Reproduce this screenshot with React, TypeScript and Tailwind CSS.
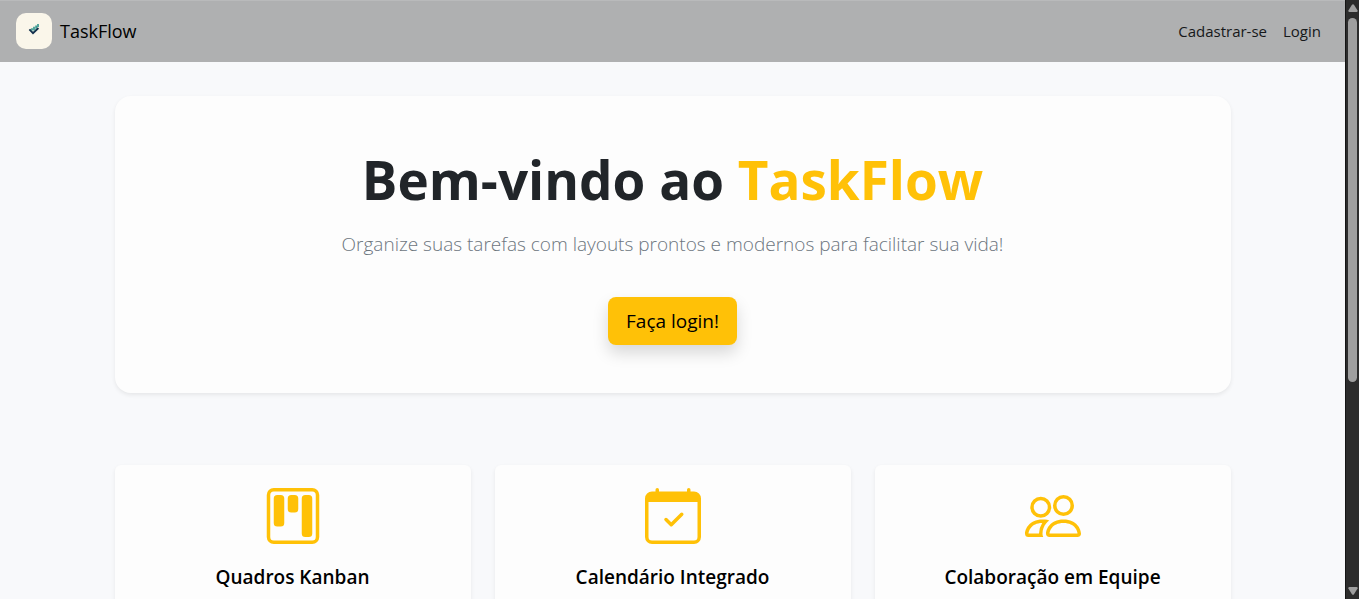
import { BsCalendarCheck, BsKanban, BsPeople } from "react-icons/bs";
import type { IconType } from "react-icons";

const features: { title: string; Icon: IconType }[] = [
  { title: "Quadros Kanban", Icon: BsKanban },
  { title: "Calendário Integrado", Icon: BsCalendarCheck },
  { title: "Colaboração em Equipe", Icon: BsPeople },
];

function Logo() {
  return (
    <span className="flex size-9 items-center justify-center rounded-[10px] bg-[#faf6ea]">
      <svg viewBox="0 0 36 36" className="size-9" fill="none" aria-hidden="true">
        <path d="M13.4 16.4l3.6 3.8 5.4-5.2" stroke="#12304d" strokeWidth="1.9" />
        <path d="M16 17.6v-2.4M18 17.4v-3.6M20.1 15.8v-3.4M22 14v-3" stroke="#1f8c84" strokeWidth="1.5" />
      </svg>
    </span>
  );
}

function Navbar() {
  return (
    <nav className="flex h-[62px] items-center justify-between bg-[#afb0b1] pr-6 pl-4 shadow-[inset_0_1px_0_#b9babb]">
      <a href="#inicio" className="flex items-center gap-2 text-[18px] text-black">
        <Logo />
        TaskFlow
      </a>
      <div className="flex gap-4 text-[15px] text-[#16181a]">
        <a href="#cadastro">Cadastrar-se</a>
        <a href="#login">Login</a>
      </div>
    </nav>
  );
}

function Hero() {
  return (
    <section className="flex flex-col items-center rounded-2xl bg-[#fdfdfd] p-12 text-center shadow-[0_2px_4px_rgba(0,0,0,0.075)]">
      <h1 className="text-[53px] leading-[72px] font-bold text-[#212529]">
        Bem-vindo ao <span className="text-[#ffc107]">TaskFlow</span>
      </h1>
      <p className="mt-3 text-[19px] leading-8 font-light text-[#6c757d]">
        Organize suas tarefas com layouts prontos e modernos para facilitar sua vida!
      </p>
      <button
        type="button"
        className="mt-[37px] h-12 cursor-pointer rounded-lg bg-[#ffc107] px-[18px] text-[19px] text-black shadow-[0_8px_16px_rgba(0,0,0,0.15)]"
      >
        Faça login!
      </button>
    </section>
  );
}

function Scrollbar() {
  return (
    <div className="flex w-[14px] shrink-0 flex-col items-center justify-between border-l border-[#151515] bg-[#2c2c2c] py-1" aria-hidden="true">
      <svg viewBox="0 0 10 8" className="h-2 w-[10px] shrink-0" fill="#9f9f9f">
        <path d="M4 .8Q5-.4 6 .8L9.6 6.5Q10 8 8.5 8h-7Q0 8 .4 6.5z" />
      </svg>
      <div className="mt-1.5 flex w-full flex-1 justify-center">
        <span className="h-[64%] w-[9px] rounded-full bg-[#9f9f9f]" />
      </div>
      <svg viewBox="0 0 10 8" className="h-2 w-[10px] shrink-0" fill="#9f9f9f">
        <path d="M4 7.2Q5 8.4 6 7.2L9.6 1.5Q10 0 8.5 0h-7Q0 0 .4 1.5z" />
      </svg>
    </div>
  );
}

export default function App() {
  return (
    <div className="flex h-screen overflow-hidden bg-[#f8f9fb] font-['Open_Sans','Noto_Sans',sans-serif]">
      <div className="min-w-0 flex-1 overflow-hidden">
        <Navbar />
        <main className="mx-auto max-w-[1140px] px-3 pt-[34px]">
          <Hero />
          <section className="mt-[72px] grid grid-cols-3 gap-6">
            {features.map(({ title, Icon }) => (
              <article
                key={title}
                className="flex flex-col items-center rounded-md bg-[#fdfdfd] px-6 pt-[23px] pb-12 text-center shadow-[0_2px_4px_rgba(0,0,0,0.075)]"
              >
                <Icon className="size-14 text-[#ffc107]" aria-hidden="true" />
                <h2 className="mt-[21px] text-[19px] leading-6 font-semibold text-black">{title}</h2>
              </article>
            ))}
          </section>
        </main>
      </div>
      <Scrollbar />
    </div>
  );
}
